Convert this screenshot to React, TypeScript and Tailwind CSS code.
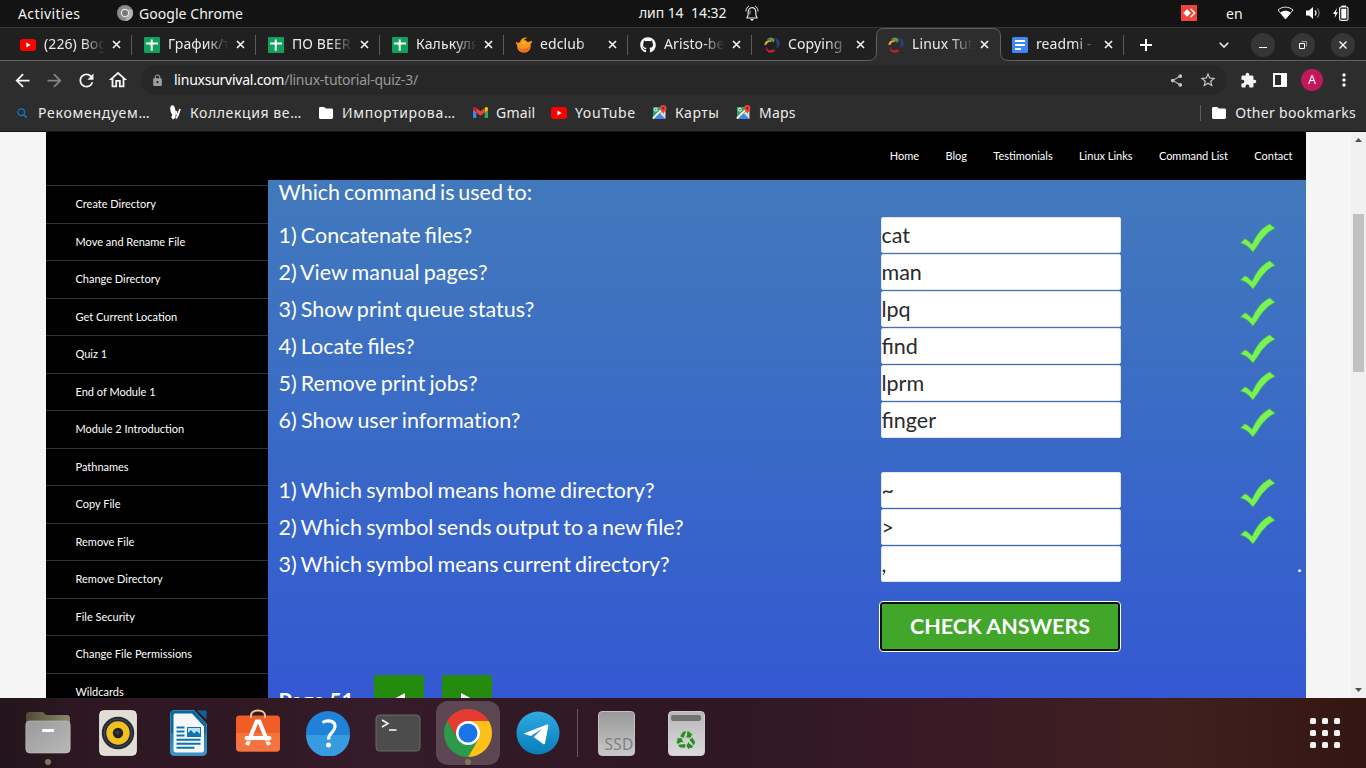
import React from "react";
import type { ReactNode } from "react";
import { FaGithub } from "react-icons/fa";
import {
  MdArrowBack,
  MdArrowForward,
  MdExtension,
  MdLock,
  MdMoreVert,
  MdOutlineHome,
  MdRefresh,
  MdShare,
  MdStarBorder,
} from "react-icons/md";

const YouTubeIcon = () => (
  <svg width="16" height="16" viewBox="0 0 16 16">
    <rect x="0" y="2" width="16" height="12" rx="3" fill="#ff0000" />
    <path d="M6.4 5.5 10.6 8 6.4 10.5Z" fill="#fff" />
  </svg>
);

const SheetsIcon = () => (
  <svg width="16" height="16" viewBox="0 0 16 16">
    <rect width="16" height="16" rx="1" fill="#12a05c" />
    <path d="M6.7 2.4h2v3h5.2v2H8.700v6.400h-2V7.400H2.100v-2h4.600Z" fill="#fff" />
  </svg>
);

const EdclubIcon = () => (
  <svg width="16" height="16" viewBox="0 0 16 16">
    <path d="M0 4.500c1 1.500 2.500 1.500 4 .8.3-2 1.500-3.500 3.500-4.300C9 .3 11 .5 11.300 1.600c-1.500-.2-2.600.3-2.900 1.300 1.300 0 2.300.8 3 2 1.700-.3 3.300-.3 4.600-1.400 0 2-.7 3.200-1.500 4 1 4.500-2.200 8-6.400 8-4.800 0-7.300-3-6.800-7C.3 7.500-.2 6 0 4.500Z" fill="#f8951d" />
    <path d="M2 10c3 2.500 8.500 2.500 12.200-1-.3 4-2.800 6-6.200 6-3.300 0-5.500-2-6-5Z" fill="#f26b1d" />
    <path d="M5 5.800c2-1 4-.7 5.500.3-2 .2-3.500.8-5.500-.3Z" fill="#ffcf57" />
  </svg>
);

const SwirlIcon = () => (
  <svg width="16" height="16" viewBox="0 0 16 16">
    <path d="M.3 7.500C1 4 4 2.500 7.800 3.400l-.8 1.500C4.500 4.500 3 6.500 2 8.300Z" fill="#f0a63a" />
    <path d="M2.600 2.500C5-.2 9-.4 10.400 2.500 10.800 4 10 5 8.800 5.800 8.800 3.500 6 2.200 2.600 2.500Z" fill="#5d9a48" />
    <path d="M10.800 1.200c3.500 0 5.800 4 4.600 7-1 2-2 2.500-3 2.800.8-3.300.3-6.500-1.600-9.800Z" fill="#263f86" />
    <path d="M2.300 9.500c.5 3 2.200 4.400 5 3.500 1.500-.5 2.400-.8 4.200.3-1.500 2.500-5.800 3.500-8 1.200C2 13 1.600 11 2.300 9.500Z" fill="#c62326" />
  </svg>
);

const DocsIcon = () => (
  <svg width="16" height="16" viewBox="0 0 16 16">
    <rect width="16" height="16" rx="1.500" fill="#4285f4" />
    <path d="M3 3h10v2H3zM3 7h10v2H3zM3 11h6v2H3z" fill="#fff" />
  </svg>
);

const FolderIcon = () => (
  <svg width="14" height="12" viewBox="0 0 14 12">
    <path d="M1.400 0h3.900l1.500 1.500h5.800c.8 0 1.400.6 1.400 1.400v7.700c0 .8-.6 1.400-1.400 1.400H1.400C.6 12 0 11.400 0 10.600V1.400C0 .6.600 0 1.400 0Z" fill="#fff" />
  </svg>
);

const GmailIcon = () => (
  <svg width="15" height="11" viewBox="0 0 15 11">
    <path d="M0 2v8.200c0 .5.400.8.800.8h2.500V4Z" fill="#4285f4" />
    <path d="M11.700 4v7h2.500c.5 0 .8-.3.800-.8V2Z" fill="#34a853" />
    <path d="M11.700 1v4.600L15 3V1.600C15 0 13.200-.5 12.200.4Z" fill="#fbbc04" />
    <path d="M3.300 5.600V1l4.200 3.200L11.700 1v4.600L7.500 8.800Z" fill="#ea4335" />
    <path d="M0 1.600V3l3.300 2.600V1L2.800.4C1.800-.5 0 0 0 1.600Z" fill="#c5221f" />
  </svg>
);

const MapsIcon = () => (
  <svg width="15" height="15" viewBox="0 0 15 15">
    <path d="M1 2h12v12H1z" fill="#34a060" />
    <path d="M8 8.500 13.500 14H2.500Z" fill="#4285f4" />
    <path d="M13.500 5v9L8 8.500 11.500 5Z" fill="#dcdcdc" />
    <path d="m.8 13.500 12-12" stroke="#f5f5f5" strokeWidth="1.800" />
    <circle cx="3.800" cy="4.600" r="1.500" fill="none" stroke="#fff" strokeWidth="1" />
    <path d="M11.300 0a3.200 3.200 0 0 0-3.200 3.200c0 2.500 2.700 3.400 3.200 6 .5-2.600 3.200-3.500 3.200-6A3.200 3.200 0 0 0 11.300 0Z" fill="#e84335" />
    <circle cx="11.300" cy="3.200" r="1.100" fill="#8c1a12" />
  </svg>
);

const CloseIcon = () => (
  <svg width="9" height="9" viewBox="0 0 9 9">
    <path d="m1 1 7 7M8 1 1 8" stroke="#f1f1f1" strokeWidth="1.700" />
  </svg>
);

const CheckMark = () => (
  <svg width="36" height="30" viewBox="0 0 36 30" className="mt-1.5">
    <path
      d="M.4 20 4.800 15.800 7.200 16.800 12 21.200C16.300 11.500 22 4.500 29.800.8l5.400 4.600C27.500 8.500 22 15.500 17.500 23l-4.700 6.200C10 25 6.300 21.500.4 20Z"
      fill="#79f353"
      stroke="#45a65a"
      strokeWidth=".8"
    />
  </svg>
);

const TopBar = () => (
  <div className="flex h-7 items-center border-b border-[#353535] bg-[#131313] pb-px text-[14px] leading-[18px] text-[#f2f2f2]">
    <span className="ml-[18px] w-[99px] pt-0.5 tracking-[0.4px]">Activities</span>
    <svg width="16" height="16" viewBox="0 0 16 16">
      <circle cx="8" cy="8" r="8" fill="#8b8b8b" />
      <path d="M8 4.500h7.200A8 8 0 0 1 8 16l3-6Z" fill="#b3b3b3" />
      <circle cx="8" cy="8" r="4.200" fill="#e6e6e6" />
      <circle cx="8" cy="8" r="3" fill="#777" />
    </svg>
    <span className="ml-1.5 w-[500px] pt-0.5 tracking-[0.05px]">Google Chrome</span>
    <span className="w-[52px] whitespace-nowrap tracking-[-0.1px]">лип 14</span>
    <span className="w-[54px] tracking-[-0.05px]">14:32</span>
    <svg width="14" height="16" viewBox="0 0 14 16" fill="none" stroke="#e5e5e5">
      <path d="M1.500 13c1.500-.8 1.700-2.500 1.700-5.500 0-3 1.500-4.900 3.800-4.900s3.800 1.900 3.800 4.900c0 3 .2 4.700 1.700 5.500Z" strokeWidth="1.200" />
      <path d="M1 6.500C1 4 2 2 4 1M13 6.500C13 4 12 2 10 1" strokeWidth="1" />
      <path d="M5.500 5.500c-.6.800-.6 2-.6 4" strokeWidth=".8" />
      <path d="M5 14h4L7 16Z" fill="#fff" stroke="none" />
    </svg>
    <div className="ml-auto mr-[17px] flex items-center">
      <svg width="16" height="16" viewBox="0 0 16 16">
        <path d="M0 0h16v16H0z" fill="#ef443b" />
        <path d="m6 4.200 3.800 3.800L6 11.800 2.200 8ZM9 4.200l1-.9L14.700 8 10 12.700l-1-.9L12.800 8Z" fill="#fff" />
      </svg>
      <span className="ml-[29px] w-[51px] pt-0.5">en</span>
      <svg width="17" height="14" viewBox="0 0 17 14">
        <path d="M1 4C5 .2 12 .2 16 4L8.500 13Z" fill="none" stroke="#e8e8e8" />
        <path d="M3.500 6.500c3-2.200 7-2.200 10 0l-5 6.500Z" fill="#fff" />
      </svg>
      <svg width="15" height="14" viewBox="0 0 15 14" className="ml-3">
        <path d="M0 4.500h3L7 1v12L3 9.500H0Z" fill="#fff" />
        <path d="M9 4.500c1.200 1.400 1.200 3.600 0 5" fill="none" stroke="#eee" strokeWidth="1.200" />
        <path d="M11.200 2.500c2.600 2.500 2.600 6.500 0 9" fill="none" stroke="#777" strokeWidth="1.200" />
      </svg>
      <svg width="16" height="16" viewBox="0 0 16 16" className="ml-3">
        <path d="M4 3 0 9h2.300L1.500 13 5 7.200H2.900Z" fill="#fff" />
        <rect x="6.600" y="2" width="8.400" height="13.300" rx="1.500" fill="none" stroke="#eee" strokeWidth="1.200" />
        <path d="M8.500.5h4.500V2H8.500ZM8.300 3.800h5v9.700h-5Z" fill="#fff" />
      </svg>
    </div>
  </div>
);

interface TabData {
  title: string;
  icon: ReactNode;
  noLine?: boolean;
}

const tabs: TabData[] = [
  { title: "(226) Bog", icon: <YouTubeIcon /> },
  { title: "График/т", icon: <SheetsIcon /> },
  { title: "ПО BEER", icon: <SheetsIcon /> },
  { title: "Калькуля", icon: <SheetsIcon /> },
  { title: "edclub", icon: <EdclubIcon /> },
  { title: "Aristo-be", icon: <FaGithub size={16} color="#fff" /> },
  { title: "Copying", icon: <SwirlIcon />, noLine: true },
  { title: "Linux Tut", icon: <SwirlIcon />, noLine: true },
  { title: "readmi -", icon: <DocsIcon /> },
];

const Tab = ({ tab }: { tab: TabData }) => (
  <div className="relative flex h-8 w-[124px] items-center pl-3">
    {tab.icon}
    <span className="ml-2 w-[62px] overflow-hidden whitespace-nowrap pb-px text-[14px] leading-5 tracking-[0.1px] text-[#ececec] [mask-image:linear-gradient(to_right,black_62%,transparent_98%)]">
      {tab.title}
    </span>
    <span className="ml-1.5">
      <CloseIcon />
    </span>
    {!tab.noLine && <span className="ml-auto h-5 w-px bg-[#5c5c5c]" />}
  </div>
);

const WindowButton = ({ children }: { children: ReactNode }) => (
  <div className="flex h-6 w-6 items-center justify-center rounded-full bg-[#363636]">
    <svg width="10" height="10" viewBox="0 0 10 10" fill="none" stroke="#fff">
      {children}
    </svg>
  </div>
);

const TabStrip = () => (
  <div className="relative flex h-[33px] items-center bg-[#202020] pl-2">
    <svg width="1366" height="33" viewBox="0 0 1366 33" className="absolute left-0 top-0">
      <path
        d="M-2 32.500H868.500Q876.500 32.500 876.500 24.500V7.500Q876.500.500 884.500.500H992.500Q1000.500.500 1000.500 8V24.500Q1000.500 32.500 1008.500 32.500H1368V40H-2Z"
        fill="#2d2d2d"
        stroke="#606060"
      />
    </svg>
    {tabs.map((t, i) => (
      <Tab key={i} tab={t} />
    ))}
    <svg width="12" height="12" viewBox="0 0 12 12" className="relative ml-4">
      <path d="M6 0v12M0 6h12" stroke="#fff" strokeWidth="2" />
    </svg>
    <svg width="10" height="6" viewBox="0 0 10 6" className="relative ml-[67px]">
      <path d="m.7.7 4.300 4.300L9.300.7" fill="none" stroke="#eee" strokeWidth="1.600" />
    </svg>
    <div className="relative ml-[22px] flex gap-4">
      <WindowButton>
        <path d="M1 7.500h8" />
      </WindowButton>
      <WindowButton>
        <path d="M1.500 3.500h5v5h-5z" />
        <path d="M3.500 1.500h5v5" stroke="#999" />
      </WindowButton>
      <WindowButton>
        <path d="m1.500 1.500 7 7M8.500 1.500l-7 7" strokeWidth="1.300" />
      </WindowButton>
    </div>
  </div>
);

const Toolbar = () => (
  <div className="flex h-[38px] items-center bg-[#2d2d2d] pl-3 text-[#f4f4f4]">
    <MdArrowBack size={21} />
    <MdArrowForward size={21} className="ml-[11px] text-[#858585]" />
    <MdRefresh size={21} className="ml-[11px]" />
    <MdOutlineHome size={22} className="ml-2.5" />
    <div className="ml-3 flex h-[30px] w-[1086px] items-center rounded-full bg-[#272727] pl-2.5 pr-2.5">
      <MdLock size={13} className="text-[#9aa0a6]" />
      <span className="ml-2.5 pb-px text-[14px] leading-5 tracking-[-0.25px] text-white">
        linuxsurvival.com<span className="text-[#999]">/linux-tutorial-quiz-3/</span>
      </span>
      <MdShare size={15} className="ml-auto text-[#c4c4c4]" />
      <MdStarBorder size={18} className="ml-[15px] text-[#c4c4c4]" />
    </div>
    <MdExtension size={17} className="ml-[13px]" />
    <svg width="14" height="14" viewBox="0 0 14 14" className="ml-4">
      <path d="M1 1h12v12H1zM9 1h4v12H9z" fill="none" stroke="#fff" strokeWidth="2" />
      <path d="M9 1h4v12H9z" fill="#fff" />
    </svg>
    <span className="ml-[14px] flex h-[22px] w-[22px] items-center justify-center rounded-full bg-[#c2185b] text-[12px] leading-none text-white">
      A
    </span>
    <MdMoreVert size={20} className="ml-[11px]" />
  </div>
);

const Bookmarks = () => (
  <div className="flex h-[33px] items-center border-b border-[#151515] bg-[#2d2d2d] pb-[5px] text-[14px] leading-5 text-[#ececec]">
    <svg width="10" height="10" viewBox="0 0 10 10" className="ml-[17px]">
      <circle cx="4.200" cy="4.200" r="3.300" fill="none" stroke="#1676cf" strokeWidth="1.300" />
      <path d="m6.500 6.500 3.200 3.200" stroke="#1676cf" strokeWidth="1.600" />
    </svg>
    <span className="ml-[11px] w-[130px] tracking-[0.75px]">Рекомендуем…</span>
    <svg width="14" height="15" viewBox="0 0 14 15">
      <path d="M4.500.3C2.500.3 1.800 2.800 2.500 5.800c.5 2 1.200 3.500 2 4L3.200 12l1.600 2.500c1.700-.5 2.500-1.700 2.700-3.500C8.200 8.500 7.600 5.500 7 3.500 6.500 1.500 5.700.3 4.500.3Z" fill="#fff" />
      <path d="M8.300 6c-.5 2 .3 3.500 1.900 3.200L12 4M10.500 9 8 13.500" fill="none" stroke="#fff" strokeWidth="1.800" />
    </svg>
    <span className="ml-2 w-[129px] tracking-[0.6px]">Коллекция ве…</span>
    <FolderIcon />
    <span className="ml-[9px] w-[131px] tracking-[0.7px]">Импортирова…</span>
    <GmailIcon />
    <span className="ml-2 w-[55px] tracking-[0.2px]">Gmail</span>
    <YouTubeIcon />
    <span className="ml-2 w-[77px] tracking-[0.6px]">YouTube</span>
    <MapsIcon />
    <span className="ml-2 w-[61px] tracking-[0.5px]">Карты</span>
    <MapsIcon />
    <span className="ml-2 tracking-[0.2px]">Maps</span>
    <span className="ml-auto mr-[11px] h-4 w-px bg-[#5c5c5c]" />
    <FolderIcon />
    <span className="ml-[9px] mr-[10px] tracking-[0.33px]">Other bookmarks</span>
  </div>
);

const lessons = [
  "Create Directory",
  "Move and Rename File",
  "Change Directory",
  "Get Current Location",
  "Quiz 1",
  "End of Module 1",
  "Module 2 Introduction",
  "Pathnames",
  "Copy File",
  "Remove File",
  "Remove Directory",
  "File Security",
  "Change File Permissions",
  "Wildcards",
];

const commandQuestions = [
  ["1) Concatenate files?", "cat"],
  ["2) View manual pages?", "man"],
  ["3) Show print queue status?", "lpq"],
  ["4) Locate files?", "find"],
  ["5) Remove print jobs?", "lprm"],
  ["6) Show user information?", "finger"],
];

const symbolQuestions = [
  ["1) Which symbol means home directory?", "~"],
  ["2) Which symbol sends output to a new file?", ">"],
  ["3) Which symbol means current directory?", ","],
];

const QuestionRow = ({ question, answer, correct }: { question: string; answer: string; correct: boolean }) => (
  <div className="flex h-[37px] shrink-0 items-start text-[21.500px] leading-9">
    <span
      className={
        question.includes("mati")
          ? "w-[602.500px] tracking-[-0.01px] [word-spacing:-1.1px]"
          : "w-[602.500px] [word-spacing:-1.4px]"
      }
    >
      {question}
    </span>
    <div className="h-9 w-60 rounded-[2px] border border-[#e4e6ea] bg-white leading-[34px] text-[#2b2b2b]">
      <span className="-ml-[0.500px]">{answer}</span>
    </div>
    {correct ? (
      <div className="ml-[118.500px]">
        <CheckMark />
      </div>
    ) : (
      <span className="ml-auto mr-1">.</span>
    )}
  </div>
);

const Page = () => (
  <div className="flex h-[566px] overflow-hidden bg-[#f5f5f5] pl-[46px] font-['Lato',sans-serif]">
    <div className="flex w-[1260px] flex-col">
      <nav className="flex h-12 shrink-0 items-center justify-end gap-[26.300px] bg-black pr-[13.500px] text-[11px] text-white">
        <span>Home</span>
        <span>Blog</span>
        <span>Testimonials</span>
        <span>Linux Links</span>
        <span>Command List</span>
        <span>Contact</span>
      </nav>
      <div className="flex min-h-0 flex-1">
        <aside className="w-[222px] bg-black pt-[5.400px] text-[11px] text-white">
          {lessons.map((l) => (
            <div key={l} className="flex h-[37.500px] items-center border-t border-[#333] pl-[29.500px]">
              {l}
            </div>
          ))}
        </aside>
        <main className="flex flex-1 flex-col overflow-hidden bg-linear-to-b from-[#4279bb] to-[#3458d2] pl-[10.500px] text-white">
          <h1 className="mb-3 h-[25px] shrink-0 text-[21.500px] leading-[25px] [word-spacing:-1.7px]">
            Which command is used to:
          </h1>
          {commandQuestions.map(([q, a]) => (
            <QuestionRow key={q} question={q} answer={a} correct />
          ))}
          <div className="h-[33px] shrink-0" />
          {symbolQuestions.map(([q, a]) => (
            <QuestionRow key={q} question={q} answer={a} correct={a !== ","} />
          ))}
          <button className="ml-[600.500px] mt-[18px] h-[51px] w-[242px] shrink-0 rounded-[4px] border border-white bg-[#101010] p-[2px]">
            <span className="flex h-full items-center justify-center rounded-[1px] bg-[#41a62a] pt-px text-[21.500px] font-bold leading-none">
              CHECK ANSWERS
            </span>
          </button>
          <div className="mt-[23px] flex h-[50px] shrink-0 text-[21.500px] font-bold">
            <span className="w-[95.500px] pt-[3px] leading-[44px] tracking-[-0.2px]">Page 51</span>
            <div className="flex h-[50px] w-[50px] items-center justify-center rounded-[2px] bg-[#258b0e]">
              <svg width="14" height="14" viewBox="0 0 14 14">
                <path d="M13 0v14L0 7Z" fill="#fff" />
              </svg>
            </div>
            <div className="ml-[18px] flex h-[50px] w-[50px] items-center justify-center rounded-[2px] bg-[#258b0e]">
              <svg width="14" height="14" viewBox="0 0 14 14">
                <path d="M1 0v14l13-7Z" fill="#fff" />
              </svg>
            </div>
          </div>
        </main>
      </div>
    </div>
    <div className="ml-auto flex w-[15px] flex-col items-center bg-[#f0f0f0]">
      <svg width="7" height="4" viewBox="0 0 7 4" className="mt-1.5">
        <path d="M0 4h7L3.500 0Z" fill="#505050" />
      </svg>
      <div className="mt-[72px] h-[158px] w-[11px] bg-[#c1c1c1]" />
      <svg width="7" height="4" viewBox="0 0 7 4" className="mb-1.5 mt-auto">
        <path d="M0 0h7L3.500 4Z" fill="#505050" />
      </svg>
    </div>
  </div>
);

const FilesIcon = () => (
  <svg width="46" height="46" viewBox="0 0 46 46">
    <defs>
      <linearGradient id="files" x1="0" y1="0" x2="1" y2="1">
        <stop offset="0" stopColor="#9a9a9a" />
        <stop offset="1" stopColor="#b8b8b8" />
      </linearGradient>
      <linearGradient id="filesBack" x1="0" y1="0" x2="1" y2="0">
        <stop offset="0" stopColor="#4e4c36" />
        <stop offset="1" stopColor="#8b8967" />
      </linearGradient>
    </defs>
    <path d="M1 18V5c0-2 1.500-3 3-3h13c2 0 3 3 5 3h20c2 0 3 1.500 3 3v10Z" fill="url(#filesBack)" />
    <rect x=".8" y="11" width="44.400" height="32" rx="4" fill="url(#files)" stroke="#c4c4c4" strokeWidth=".6" />
    <rect x="17" y="19" width="12" height="3" rx="1" fill="#fff" />
  </svg>
);

const MusicIcon = () => (
  <svg width="38" height="46" viewBox="0 0 38 46">
    <rect x=".7" y=".7" width="36.600" height="44.600" rx="4" fill="#e0ddd2" stroke="#f1efe8" />
    <circle cx="19" cy="23" r="16.200" fill="#252936" />
    <circle cx="19" cy="23" r="14" fill="none" stroke="#454957" />
    <circle cx="19" cy="23" r="11.700" fill="#f2bf20" />
    <circle cx="19" cy="23" r="5.200" fill="#20232a" />
    <circle cx="18.500" cy="22.500" r="2" fill="#3b3b3b" />
  </svg>
);

const WriterIcon = () => (
  <svg width="37" height="46" viewBox="0 0 37 46">
    <defs>
      <linearGradient id="writer" x1="0" y1="0" x2="0" y2="1">
        <stop offset=".5" stopColor="#0a699f" />
        <stop offset=".5" stopColor="#197fb8" />
        <stop offset="1" stopColor="#3b98c8" />
      </linearGradient>
    </defs>
    <path d="M4 .500h20L36.500 14v28c0 2-1.500 3.500-3.500 3.500H4C2 45.500.5 44 .5 42V4C.5 2 2 .500 4 .500Z" fill="url(#writer)" stroke="#4aa4cf" strokeWidth=".7" />
    <path d="M27 .500h9.500v9Z" fill="#07679c" />
    <path d="M5 3.500h17l12 13V40c0 1.500-.8 2.500-2.300 2.500H6c-1.500 0-2.500-1-2.500-2.500V6c0-1.500.5-2.500 1.500-2.500Z" fill="#f6f6f6" />
    <path d="M6.500 17.500h8M6.500 21.500h8M6.500 25.500h8M6.500 29.700h24M6.500 33.700h24M6.500 37.700h18" stroke="#0d74ac" strokeWidth="2" />
    <rect x="17.500" y="17.500" width="13" height="9" fill="#bce0f1" stroke="#0d74ac" />
    <path d="M18 26v-3l3-3 3 3.500 3-2.500 3 3V26Z" fill="#0d74ac" />
  </svg>
);

const SoftwareIcon = () => (
  <svg width="46" height="44" viewBox="0 0 46 44">
    <rect x="1" y="6.500" width="44" height="36" rx="3.500" fill="#f05d27" />
    <path d="M1 24h44v15c0 2-1.500 3.500-3.500 3.500h-37C2.500 42.500 1 41 1 39Z" fill="#f3743f" />
    <path d="M16 9V6.500c0-3 3-5 7-5s7 2 7 5V9" fill="none" stroke="#f1c798" strokeWidth="2" />
    <path d="M12 36 21.700 12.500h2.600L34 36" fill="none" stroke="#fff" strokeWidth="4" />
    <path d="M11.500 29h23" fill="none" stroke="#fff" strokeWidth="4" strokeLinecap="round" />
    <path d="M10.500 32h25" stroke="#f3743f" strokeWidth="1" />
  </svg>
);

const HelpIcon = () => (
  <svg width="46" height="46" viewBox="0 0 46 46">
    <circle cx="23" cy="23" r="22" fill="#1f81d7" />
    <path d="M1 25a22 22 0 0 0 44 0Z" fill="#379bdf" />
    <path d="M17.500 12.500c4-2.500 13-2.500 12.500 4.500C29.500 23 23.500 22.500 23.500 29.500" fill="none" stroke="#fff" strokeWidth="3.200" />
    <circle cx="23.500" cy="35" r="2.500" fill="#fff" />
  </svg>
);

const TerminalIcon = () => (
  <svg width="46" height="38" viewBox="0 0 46 38">
    <rect x="1" y="1" width="44" height="36" rx="3.500" fill="#4c4c4c" stroke="#696969" />
    <path d="m7 6 6 3.500L7 13M14 16h7.500" fill="none" stroke="#fff" strokeWidth="1.500" />
  </svg>
);

const ChromeIcon = () => (
  <svg width="48" height="48" viewBox="0 0 48 48">
    <path d="M24 12h20.780A24 24 0 0 0 3.220 12L13.600 30Z" fill="#e53b30" />
    <path d="M34.390 30 24 48A24 24 0 0 0 44.780 12H24Z" fill="#fbc117" />
    <path d="M13.610 30 3.220 12A24 24 0 0 0 24 48l10.390-18Z" fill="#2c9a4b" />
    <circle cx="24" cy="24" r="12" fill="#fff" />
    <circle cx="24" cy="24" r="9.500" fill="#1a73e8" />
  </svg>
);

const TelegramIcon = () => (
  <svg width="44" height="44" viewBox="0 0 44 44">
    <defs>
      <linearGradient id="telegram" x1="0" y1="0" x2="0" y2="1">
        <stop offset="0" stopColor="#30a9e3" />
        <stop offset="1" stopColor="#087db9" />
      </linearGradient>
    </defs>
    <circle cx="22" cy="22" r="21.500" fill="url(#telegram)" />
    <path d="M8.500 22.200 31 13.500c1-.3 1.500.3 1.300 1.500l-3.200 17c-.3 1.300-1 1.600-2 1L17.700 26l9-8.500L14.800 25l-6.300-2c-1-.2-1-.5 0-.8Z" fill="#fff" />
  </svg>
);

/* One bent arrow of the recycling sign; the other two are the same arrow turned by a third of a circle. */
const RecycleIcon = () => (
  <svg width="20" height="19" viewBox="-10 -10.500 20 19" fill="#269020" className="mt-[9px]">
    {["", "rotate(120)", "rotate(240)"].map((turn) => (
      <g key={turn} transform={turn}>
        <path d="M-5.800-4.300-3.300-8.300Q-2.900-9-2-9H.2L-2.600-2.400Z" />
        <path d="M1.200-9H2.600Q3.500-9 3.900-8.300L5-6.500 6.600-7.400 4.500-2.800-.8-3.200 1-4.200Z" />
      </g>
    ))}
  </svg>
);

const DockSlot = ({ children, dot, active }: { children: ReactNode; dot?: boolean; active?: boolean }) => (
  <div className={active ? "relative flex h-16 w-16 items-center justify-center rounded-xl bg-white/20" : "relative flex h-16 w-16 items-center justify-center"}>
    {children}
    {dot && <span className="absolute bottom-0 left-[29px] h-1.5 w-1.5 rounded-full bg-[#7c7a59]" />}
  </div>
);

const Dock = () => (
  <div className="flex h-[70px] items-center gap-1.5 bg-[linear-gradient(90deg,#22151b_0%,#2c1722_5%,#311924_20%,#361b2a_28%,#321926_38%,#2e1823_50%,#391a25_70%,#40201f_86%,#3a1b17_93%,#331512_100%)] pl-4">
    <DockSlot dot><FilesIcon /></DockSlot>
    <DockSlot><MusicIcon /></DockSlot>
    <DockSlot><WriterIcon /></DockSlot>
    <DockSlot><div className="-mt-1"><SoftwareIcon /></div></DockSlot>
    <DockSlot><HelpIcon /></DockSlot>
    <DockSlot><TerminalIcon /></DockSlot>
    <DockSlot active dot><ChromeIcon /></DockSlot>
    <DockSlot><TelegramIcon /></DockSlot>
    <span className="ml-px h-12 w-px bg-[#6a5962]" />
    <div className="ml-1 flex h-16 w-14 items-center justify-center">
      <div className="flex h-[45px] w-[37px] items-end justify-end overflow-hidden rounded-[4px] border border-[#c2c2c2] bg-linear-to-b from-[#999] to-[#c8c8c8] text-[15.500px] leading-[22px] tracking-[0.2px] text-[#808080]">
        SSD
      </div>
    </div>
    <div className="ml-2 flex h-16 w-14 items-center justify-center">
      <div className="flex h-[45px] w-[37px] flex-col items-center rounded-[4px] border border-[#ccc] bg-linear-to-b from-[#b8b8b8] to-[#dadada] pt-[3px]">
        <span className="h-1.5 w-[30px] shrink-0 rounded-[2px] bg-[#737373]" />
        <RecycleIcon />
      </div>
    </div>
    <div className="ml-auto mr-[26px] grid grid-cols-3 gap-1.5">
      {Array.from({ length: 9 }, (_, i) => (
        <span key={i} className="h-1.5 w-1.5 rounded-[1.500px] bg-[#f2f2f2]" />
      ))}
    </div>
  </div>
);

export default function App() {
  return (
    <div className="h-[768px] w-[1366px] overflow-hidden font-['Noto_Sans',sans-serif]">
      <TopBar />
      <TabStrip />
      <Toolbar />
      <Bookmarks />
      <Page />
      <Dock />
    </div>
  );
}
